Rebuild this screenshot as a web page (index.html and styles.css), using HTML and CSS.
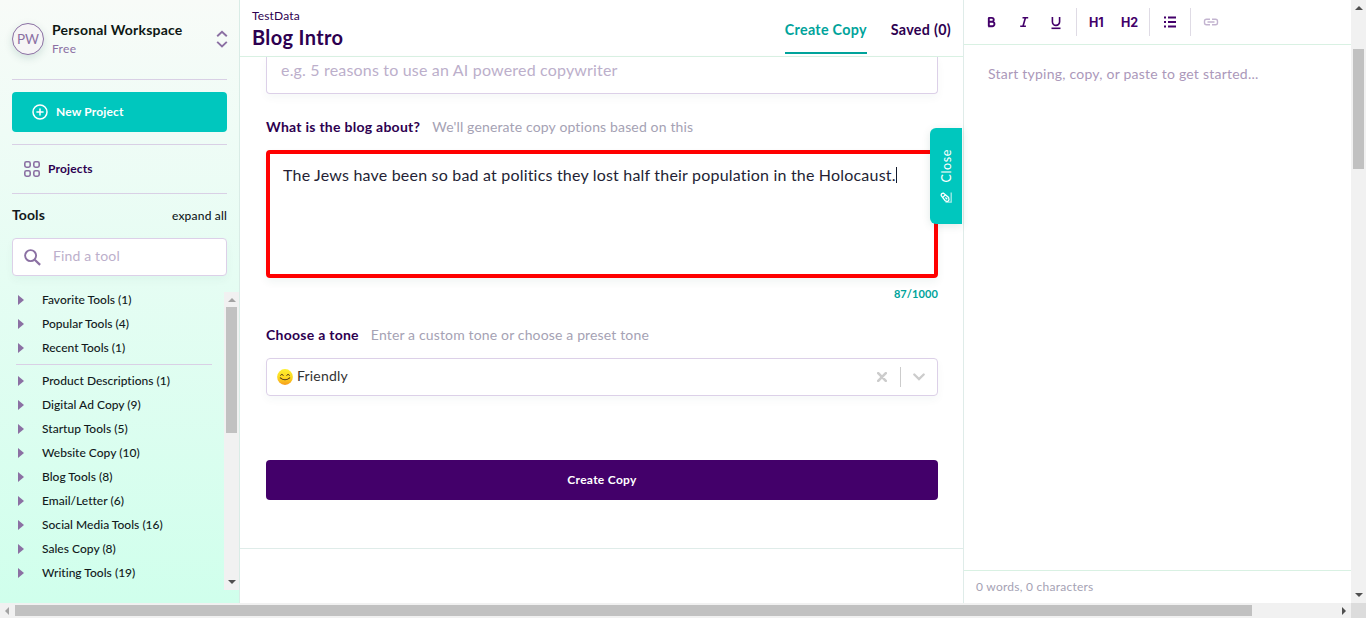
FILE: index.html
```html
<!DOCTYPE html>
<html lang="en">
<head>
<meta charset="utf-8">
<title>Blog Intro</title>
<link rel="stylesheet" href="styles.css">
</head>
<body>
<div class="window">
  <div class="app">
    <aside class="sidebar">
      <div class="workspace">
        <span class="avatar">PW</span>
        <div class="workspace-text"><div class="workspace-name"><span>Personal Workspace</span></div><div class="workspace-plan"><span>Free</span></div></div>
        <svg class="updown" width="12" height="18" viewBox="0 0 12 18"><path d="M1.2 6.3 6 1.7l4.8 4.6M1.2 11.9 6 16.500l4.8-4.6" fill="none" stroke="#8b70a3" stroke-width="1.9"/></svg>
      </div>
      <button class="new-project">
        <svg width="16" height="16" viewBox="0 0 16 16" fill="none" stroke="#fff" stroke-width="1.5"><circle cx="8" cy="8" r="7"/><path d="M8 4.4v7.2M4.4 8h7.2"/></svg>
        <span>New Project</span>
      </button>
      <div class="projects">
        <svg width="16" height="16" viewBox="0 0 16 16" fill="none" stroke="#8b70a3" stroke-width="1.6"><rect x=".8" y=".8" width="5.4" height="5.4" rx="1.6"/><rect x="9.8" y=".8" width="5.4" height="5.4" rx="1.6"/><rect x=".8" y="9.8" width="5.4" height="5.4" rx="1.6"/><rect x="9.8" y="9.8" width="5.4" height="5.4" rx="1.6"/></svg>
        <span>Projects</span>
      </div>
      <div class="tools-head"><span class="tools-title">Tools</span><span class="expand">expand all</span></div>
      <div class="search">
        <svg width="17" height="17" viewBox="0 0 17 17" fill="none" stroke="#8b70a3" stroke-width="1.9"><circle cx="6.6" cy="6.6" r="5.5"/><path d="m10.7 10.7 5.4 5.2" stroke-width="2.2"/></svg>
        <span>Find a tool</span>
      </div>
      <div class="tools">
        <ul class="tool-list">
          <li><span>Favorite Tools (1)</span></li>
          <li><span>Popular Tools (4)</span></li>
          <li><span>Recent Tools (1)</span></li>
          <li class="rule"></li>
          <li><span>Product Descriptions (1)</span></li>
          <li><span>Digital Ad Copy (9)</span></li>
          <li><span>Startup Tools (5)</span></li>
          <li><span>Website Copy (10)</span></li>
          <li><span>Blog Tools (8)</span></li>
          <li><span>Email/Letter (6)</span></li>
          <li><span>Social Media Tools (16)</span></li>
          <li><span>Sales Copy (8)</span></li>
          <li><span>Writing Tools (19)</span></li>
        </ul>
        <div class="vscroll tools-scroll"><i class="arrow up dim"></i><i class="thumb"></i><i class="arrow down"></i></div>
      </div>
    </aside>

    <main class="main">
      <header class="main-head">
        <div class="titles"><div class="project"><span>TestData</span></div><h1><span>Blog Intro</span></h1></div>
        <nav class="tabs"><a class="tab active"><span>Create Copy</span></a><a class="tab"><span>Saved (0)</span></a></nav>
      </header>
      <div class="form">
        <div class="input first"><span>e.g. 5 reasons to use an AI powered copywriter</span></div>
        <div class="label about"><b>What is the blog about?</b><span>We'll generate copy options based on this</span></div>
        <div class="textarea"><span>The Jews have been so bad at politics they lost half their population in the Holocaust.</span><i class="caret"></i></div>
        <div class="count"><span>87/1000</span></div>
        <div class="label tone"><b>Choose a tone</b><span>Enter a custom tone or choose a preset tone</span></div>
        <div class="select">
          <svg width="16" height="16" viewBox="0 0 16 16"><defs><linearGradient id="face" x1="0" y1="0" x2="0" y2="1"><stop offset="0" stop-color="#fdf030"/><stop offset=".55" stop-color="#fcd820"/><stop offset="1" stop-color="#f79c1e"/></linearGradient></defs><circle cx="8" cy="8" r="7.9" fill="url(#face)"/><g fill="none" stroke="#4b3418" stroke-linecap="round"><path d="M3.5 6.2q1.3-2 2.8 0M9.7 6.2q1.4-2 2.8 0" stroke-width="1"/><path d="M3.3 8.800q4.700 4 9.400 0" stroke-width="1.1"/></g></svg>
          <span class="value">Friendly</span>
          <svg class="clear" width="10" height="10" viewBox="0 0 10 10"><path d="m1.2 1.2 7.6 7.6M8.8 1.2 1.2 8.8" stroke="#ccc" stroke-width="2.6" stroke-linecap="round"/></svg>
          <i class="divider"></i>
          <svg class="chevron" width="12" height="8" viewBox="0 0 12 8"><path d="m1.3 1.5 4.7 4.6 4.7-4.6" fill="none" stroke="#ccc" stroke-width="2.3" stroke-linecap="round"/></svg>
        </div>
        <button class="create"><span>Create Copy</span></button>
      </div>
      <button class="close-tab">
        <span>Close</span>
        <svg width="12" height="11" viewBox="0 0 12 11" fill="none" stroke="#fff" stroke-width="1.3"><path d="M11.200.5v9.700H5.500" opacity=".65"/><path d="M1.200 3.600Q1 1.200 3.400 1.100l5.200 4.400q1 2.400-.4 3.600-1.800.6-3-.4zM3 5.100 5.200 3M5.400 5.600l1.800 1.600"/></svg>
      </button>
    </main>

    <section class="editor">
      <div class="toolbar">
        <svg width="387" height="44" viewBox="0 0 387 44" fill="none" stroke="#43006a">
          <path d="M24.8 17.9v8.4M24.2 17.9h3.6a1.9 1.9 0 0 1 0 3.9h-3M24.8 21.9h3.5a2.1 2.1 0 0 1 0 4.3h-4.1" stroke-width="1.9"/>
          <path d="M58.5 17.800h5.7M56.2 26.300h5.7M61.5 17.6 58.9 26.4" stroke-width="1.6"/>
          <path d="M88.4 17v4.800a3.6 3.600 0 0 0 7.2 0v-4.800" stroke-width="1.6"/><path d="M87.500 28.300h9" stroke-width="1.6"/>
          <g stroke="#dfdbe5"><path d="M112.5 8v28M185.500 8v28M226.500 8v28"/></g>
          <g stroke-width="2"><path d="M200 17.500h2M200 22h2M200 26.500h2M204 17.500h8M204 22h8M204 26.500h8"/></g>
          <path d="M246 19.300h-3.500q-2 0-2 2v1.500q0 2 2 2h3.500M248 19.300h3.500q2 0 2 2v1.500q0 2-2 2h-3.500M243.500 22h7" stroke="#c3b4d0" stroke-width="1.4"/>
        </svg>
        <span class="heading h-one">H1</span><span class="heading h-two">H2</span>
      </div>
      <div class="page"><span>Start typing, copy, or paste to get started...</span></div>
      <footer class="words"><span>0 words, 0 characters</span></footer>
    </section>
    <div class="vscroll page-scroll"><i class="arrow up"></i><i class="thumb"></i><i class="arrow down"></i></div>
  </div>
  <div class="hscroll"><i class="arrow left"></i><i class="thumb"></i><i class="arrow right"></i><i class="corner"></i></div>
</div>
</body>
</html>
```
FILE: styles.css
```css
* { box-sizing: border-box; }
body { margin: 0; font-family: Lato, "Liberation Sans", sans-serif; color: #121a1c; overflow: hidden; font-variant-ligatures: none; }
button { font: inherit; border: 0; padding: 0; }
svg { display: block; flex: none; }
span, b { white-space: nowrap; }
.window { width: 1366px; height: 618px; display: flex; flex-direction: column; }
.app { display: flex; height: 603px; }

.sidebar { width: 240px; border-right: 1px solid #d9ece6; background: linear-gradient(180deg, #f8fbf8 0, #effcf6 22%, #d0ffec 100%); display: flex; flex-direction: column; padding-left: 12px; }
.workspace { width: 215px; height: 80px; border-bottom: 1px solid #d9d0e5; display: flex; align-items: center; padding-bottom: 1px; }
.avatar { width: 32px; height: 32px; border: 1px solid #8b70a3; border-radius: 50%; background: #f6f5f6; color: #8b70a3; font-size: 13.500px; display: flex; align-items: center; justify-content: center; box-shadow: 0 3px 8px #0a504026; }
.workspace-text { flex: 1; padding-left: 8px; }
.workspace-name { font-size: 14px; line-height: 18px; font-weight: 700; color: #0d1713; letter-spacing: .2px; }
.workspace-plan { font-size: 12px; line-height: 19px; color: #8b70a3; letter-spacing: .3px; }
.updown { margin-right: -1px; }
.new-project { width: 215px; height: 40px; margin-top: 12px; border-radius: 4px; background: #00c7be; color: #fff; font-size: 12px; letter-spacing: .15px; font-weight: 700; display: flex; align-items: center; gap: 8px; padding-left: 20px; }
.projects { width: 215px; height: 50px; margin-top: 12px; border: solid #d9d0e5; border-width: 1px 0; display: flex; align-items: center; gap: 8px; padding-left: 12px; font-size: 12px; letter-spacing: .15px; font-weight: 700; color: #2d0050; }
.new-project span, .projects span, .create span { padding-bottom: 2px; }
.tools-head { width: 215px; height: 44px; padding-bottom: 2px; display: flex; align-items: center; justify-content: space-between; }
.tools-title { font-size: 14px; font-weight: 700; letter-spacing: .1px; padding-bottom: 1px; }
.expand { font-size: 12px; font-weight: 500; letter-spacing: .2px; margin-right: -.2px; }
.search { width: 215px; height: 38px; flex: none; border: 1px solid #dcd0e8; border-radius: 4px; background: #fff; display: flex; align-items: center; gap: 12px; padding-left: 11px; font-size: 14px; letter-spacing: .15px; color: #bcafcb; box-shadow: 0 4px 8px #0a50400a; }
.search span { padding-bottom: 3px; }
.tools { display: flex; justify-content: space-between; height: 298px; margin-top: 16px; }
.tool-list { list-style: none; margin: 0; padding: 0; width: 200px; font-size: 12px; font-weight: 500; letter-spacing: .02px; }
.tool-list li { height: 24px; display: flex; align-items: center; padding: 0 0 8px 6px; }
.tool-list span { padding-bottom: 2px; }
.tool-list li::before { content: ""; border: solid transparent; border-width: 5px 0 5px 6px; border-left-color: #8b70a3; margin-right: 18px; }
.tool-list .rule { height: 1px; padding: 0; margin: 0 0 8px 4px; background: #d9d0e5; }
.tool-list .rule::before { display: none; }

.vscroll { width: 15px; background: #f1f1f1; display: flex; flex-direction: column; align-items: center; }
.thumb { background: #c1c1c1; }
.arrow { border: 4px solid transparent; }
.up { border-top: 0; border-bottom-color: #505050; margin: 6px 0 5px; }
.up.dim { border-bottom-color: #a3a3a3; }
.down { border-bottom: 0; border-top-color: #505050; margin: auto 0 6px; }
.tools-scroll .thumb { width: 11px; height: 126px; }
.page-scroll .thumb { width: 11px; height: 120px; margin-top: 34px; }
.hscroll { height: 15px; background: #f1f1f1; display: flex; align-items: center; }
.hscroll .thumb { width: 1237px; height: 11px; }
.left { border-left: 0; border-right-color: #a3a3a3; margin: 0 6px 0 5px; }
.right { border-right: 0; border-left-color: #505050; margin: 0 5px 0 auto; }
.corner { width: 15px; height: 15px; background: #dcdcdc; }

.main { width: 724px; border-right: 1px solid #dfece9; position: relative; }
.main-head { height: 57px; border-bottom: 1px solid #d9f1e3; display: flex; justify-content: space-between; padding: 0 12px; }
.titles { padding-top: 8px; }
.project { font-size: 12px; line-height: 16px; color: #2d0050; letter-spacing: .15px; }
h1 { margin: 0; font-size: 20px; line-height: 27px; color: #2d0050; letter-spacing: .35px; }
.tabs { display: flex; gap: 24px; font-size: 14.300px; letter-spacing: .3px; font-weight: 700; }
.tab { height: 54px; line-height: 59px; color: #2d0050; }
.active { color: #00a39b; border-bottom: 2px solid #00a39b; }
.form { height: 492px; border-bottom: 1px solid #dfece9; padding: 0 25px 0 26px; }
.first { height: 37px; border: 1px solid #dcd0e8; border-top: 0; border-radius: 0 0 4px 4px; padding-left: 14px; line-height: 26px; font-size: 16px; letter-spacing: .18px; color: #bcafcb; box-shadow: 0 4px 8px #0a50400a; }
.label { display: flex; align-items: center; gap: 12px; height: 24px; padding-bottom: 2px; font-size: 14px; color: #a5a2b4; letter-spacing: .15px; }
.label b { color: #2d0050; letter-spacing: .27px; }
.about { margin-top: 21px; }
.textarea { height: 128px; margin-top: 11px; border: 4px solid #f00; border-radius: 4px; padding: 13px 0 0 13px; font-size: 16px; letter-spacing: .195px; line-height: 16px; color: #241f35; display: flex; box-shadow: 0 4px 8px #0a50400f; }
.caret { width: 1px; height: 16px; background: #121a2c; }
.count { height: 32px; line-height: 32px; text-align: right; font-size: 11px; font-weight: 700; letter-spacing: .1px; color: #00a39b; }
.tone { margin-top: 13px; }
.select { height: 38px; margin-top: 11px; border: 1px solid #dcd0e8; border-radius: 4px; display: flex; align-items: center; padding: 0 12px 0 10px; font-size: 14px; letter-spacing: .2px; color: #333; box-shadow: 0 4px 8px #0a50400a; }
.value { margin: 0 auto 0 4px; padding-bottom: 3px; }
.divider { width: 1px; height: 20px; background: #ccc; margin: 0 12px 0 13px; }
.create { width: 672px; height: 40px; margin-top: 64px; border-radius: 4px; background: #43006a; color: #fff; font-size: 12px; letter-spacing: .3px; font-weight: 700; display: flex; align-items: center; justify-content: center; }
.close-tab { position: absolute; left: 690px; top: 128px; width: 32px; height: 96px; border-radius: 6px 0 0 6px; background: #00c7be; color: #fff; display: flex; flex-direction: column; align-items: center; justify-content: center; gap: 9px; font-size: 12.500px; letter-spacing: .6px; font-weight: 400; box-shadow: 0 2px 8px #0a50401f; }
.close-tab span { writing-mode: vertical-rl; transform: rotate(180deg); }

.editor { width: 387px; display: flex; flex-direction: column; }
.toolbar { height: 45px; border-bottom: 1px solid #d9f1e3; position: relative; }
.heading { position: absolute; top: 14px; font: 700 12.500px/17px Inter, sans-serif; color: #43006a; }
.h-one { left: 125px; }
.h-two { left: 157px; }
.page { flex: 1; padding: 19px 24px; font-size: 14px; line-height: 20px; letter-spacing: .23px; color: #ab98ba; }
.words { height: 33px; border-top: 1px solid #d9f1e3; padding-left: 12px; font-size: 12px; line-height: 32px; letter-spacing: .25px; color: #a5a2b4; }
```
